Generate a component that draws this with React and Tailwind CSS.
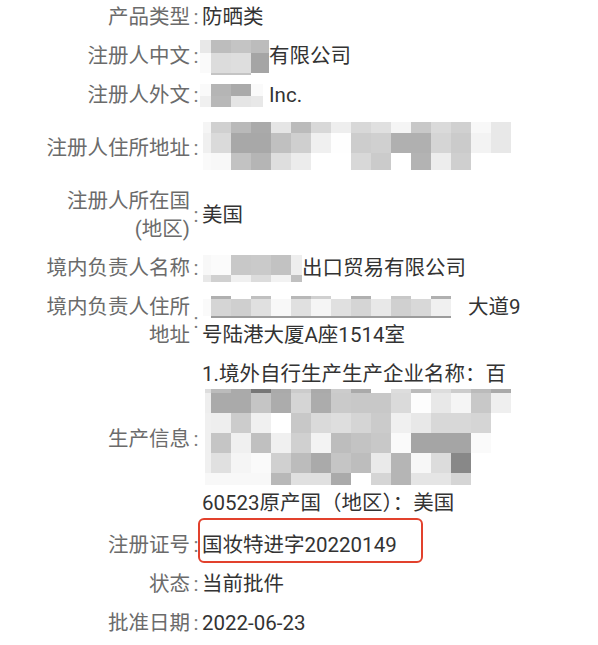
import React from "react";

const hx = (s) => `#${s}${s}${s}`;

function Mosaic({ cols, rows, data, className = "" }) {
  return (
    <div className={`flex flex-col shrink-0 ${className}`}>
      {rows.map((h, ri) => (
        <div key={ri} className="flex" style={{ height: h }}>
          {cols.map((w, ci) => (
            <div
              key={ci}
              style={{ width: w, height: h, backgroundColor: hx(data[ri][ci]) }}
            />
          ))}
        </div>
      ))}
    </div>
  );
}

const c20 = (n) => Array.from({ length: n }, () => 20);

function Row({ label, children, className = "" }) {
  return (
    <div className={`flex items-center ${className}`}>
      <div className="w-[146px] shrink-0 text-right text-[#6b6b6b]">{label}</div>
      <div className="w-[12px] shrink-0 text-center text-[#7a7a7a]">:</div>
      <div className="w-[320px] shrink-0 text-[#333333]">{children}</div>
    </div>
  );
}

export default function App() {
  return (
    <div className="w-[598px] h-[645px] overflow-hidden bg-white pl-[44px] pt-[3px] flex flex-col gap-[11px] text-[20.5px] leading-[28px] font-['Roboto','Noto_Sans_CJK_SC',sans-serif]">
      <Row label="产品类型">防晒类</Row>

      <Row label="注册人中文">
        <div className="flex items-center h-[28px] -ml-[2px]">
          <Mosaic
            className="mt-[3px]"
            cols={[11, 20, 20, 18]}
            rows={[13, 20, 2]}
            data={[
              ["e8", "bd", "c4", "bc"],
              ["fa", "dc", "de", "a5"],
              ["ff", "c4", "c4", "ff"],
            ]}
          />
          <span className="whitespace-nowrap">有限公司</span>
        </div>
      </Row>

      <Row label="注册人外文">
        <div className="flex items-center h-[28px] -ml-[2px]">
          <Mosaic
            cols={[11, 20, 20, 12]}
            rows={[12, 11]}
            data={[
              ["fa", "b5", "aa", "fa"],
              ["f0", "b8", "e5", "e8"],
            ]}
          />
          <span className="whitespace-nowrap ml-[6px]">Inc.</span>
        </div>
      </Row>

      <Row label="注册人住所地址">
        <div className="flex items-center h-[56px] ml-[1px]">
          <Mosaic
            className="mb-[4px]"
            cols={[8, ...c20(15)]}
            rows={[11, 20, 17]}
            data={[
              ["f5", "d0", "b9", "aa", "e5", "bb", "d8", "ee", "d8", "e0", "f5", "c8", "da", "d0", "f8", "e8"],
              ["f0", "da", "a8", "a8", "c0", "cf", "f0", "fe", "cd", "d0", "b0", "b0", "d5", "cb", "f3", "e8"],
              ["fa", "f8", "c2", "b5", "de", "ec", "ff", "ff", "d8", "cb", "ff", "b3", "ed", "cf", "ff", "ff"],
            ]}
          />
        </div>
      </Row>

      <Row
        label={
          <>
            注册人所在国
            <br />
            (地区)
          </>
        }
      >
        美国
      </Row>

      <Row label="境内负责人名称">
        <div className="flex items-center h-[28px] ml-[1px]">
          <Mosaic
            cols={[8, 20, 20, 20, 20, 11]}
            rows={[20, 7]}
            data={[
              ["f8", "fb", "c8", "ca", "c2", "ee"],
              ["e8", "d0", "f0", "dc", "f2", "c0"],
            ]}
          />
          <span className="whitespace-nowrap">出口贸易有限公司</span>
        </div>
      </Row>

      <Row
        label={
          <>
            境内负责人住所
            <br />
            地址
          </>
        }
      >
        <div className="flex items-center h-[28px] ml-[1px]">
          <Mosaic
            cols={[8, ...c20(12)]}
            rows={[3, 17, 2]}
            data={[
              ["ff", "b0", "ff", "c0", "ff", "b8", "d0", "ff", "b0", "ff", "c8", "ff", "b0"],
              ["fa", "d5", "cf", "e0", "f8", "e0", "f5", "e0", "d5", "e8", "d0", "d8", "f0"],
              ["ff", "9c", "9c", "9c", "9c", "9c", "9c", "9c", "9c", "9c", "9c", "9c", "9c"],
            ]}
          />
          <span className="whitespace-nowrap ml-[17px]">大道9</span>
        </div>
        <div className="whitespace-nowrap">号陆港大厦A座1514室</div>
      </Row>

      <Row label="生产信息">
        <div className="whitespace-nowrap">1.境外自行生产生产企业名称：百</div>
        <div className="h-[101px] pt-[1px] ml-[3px]">
          <Mosaic
            cols={[6, ...c20(15)]}
            rows={[4, 20, 20, 20, 20, 12]}
            data={[
              ["dd", "bb", "aa", "77", "aa", "cc", "aa", "cc", "aa", "ff", "dd", "bb", "dd", "cc", "bb", "aa"],
              ["ee", "aa", "aa", "c5", "ac", "d5", "ac", "ca", "c8", "c8", "da", "fd", "e8", "f5", "c8", "ef"],
              ["f0", "ee", "cc", "f0", "ff", "c8", "da", "de", "d5", "cb", "f0", "e8", "d8", "d8", "d5", "ff"],
              ["f0", "c5", "f0", "c0", "f0", "d0", "f3", "bd", "c3", "c8", "fa", "a5", "a5", "a5", "fa", "ff"],
              ["f0", "e0", "f5", "fa", "d0", "bc", "aa", "c5", "bd", "ea", "b5", "f7", "dc", "88", "ff", "ff"],
              ["f8", "f8", "f8", "f8", "b8", "e0", "e0", "aa", "ff", "d5", "b5", "e5", "e5", "d5", "ff", "ff"],
            ]}
          />
        </div>
        <div className="whitespace-nowrap">60523原产国（地区）：美国</div>
      </Row>

      <Row label="注册证号" className="mt-[3px]">
        <div className="relative h-[28px] whitespace-nowrap">
          国妆特进字20220149
          <div className="absolute left-[-4px] top-[-13px] w-[225px] h-[45px] border-2 border-[#e2412d] rounded-[6px]" />
        </div>
      </Row>

      <Row label="状态">当前批件</Row>

      <Row label="批准日期">2022-06-23</Row>
    </div>
  );
}
